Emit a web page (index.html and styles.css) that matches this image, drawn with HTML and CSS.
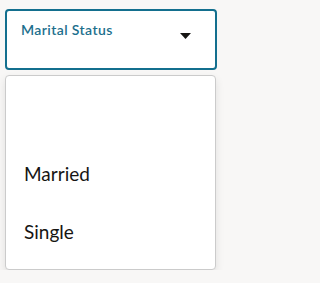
FILE: index.html
```html
<!DOCTYPE html>
<html>
<head>
<meta charset="utf-8">
<link rel="stylesheet" href="styles.css">
</head>
<body>
<div class="field">
  <span class="label">Marital Status</span>
  <svg class="caret" width="11" height="6" viewBox="0 0 11 6"><path d="M0 0H11L5.5 6Z" fill="#161513"/></svg>
</div>
<ul class="menu">
  <li class="item empty"></li>
  <li class="item">Married</li>
  <li class="item">Single</li>
</ul>
</body>
</html>
```
FILE: styles.css
```css
html, body {
  margin: 0;
  padding: 0;
  background: #f8f7f6;
  font-family: Lato, "Noto Sans", sans-serif;
}
.field {
  box-sizing: border-box;
  margin: 9px 0 0 5px;
  width: 212px;
  height: 61px;
  border: 2px solid #136f8e;
  border-radius: 4px;
  background: #fff;
  padding: 10px 24px 0 14px;
  display: flex;
  justify-content: space-between;
  align-items: flex-start;
}
.label {
  font-size: 14px;
  line-height: 17px;
  font-weight: 600;
  letter-spacing: 0.4px;
  color: #1c6f8d;
}
.caret {
  display: block;
  margin-top: 12px;
}
.menu {
  box-sizing: border-box;
  list-style: none;
  margin: 5px 0 0 5px;
  padding: 8px 0 9px;
  width: 211px;
  height: 195px;
  background: #fff;
  border: 1px solid #cbcbcb;
  border-radius: 4px;
  box-shadow: 0 4px 8px rgba(0, 0, 0, 0.10);
}
.item {
  height: 58px;
  display: flex;
  align-items: center;
  padding-left: 18px;
  font-size: 19px;
  color: #161513;
}
.item.empty {
  height: 60px;
}
```
